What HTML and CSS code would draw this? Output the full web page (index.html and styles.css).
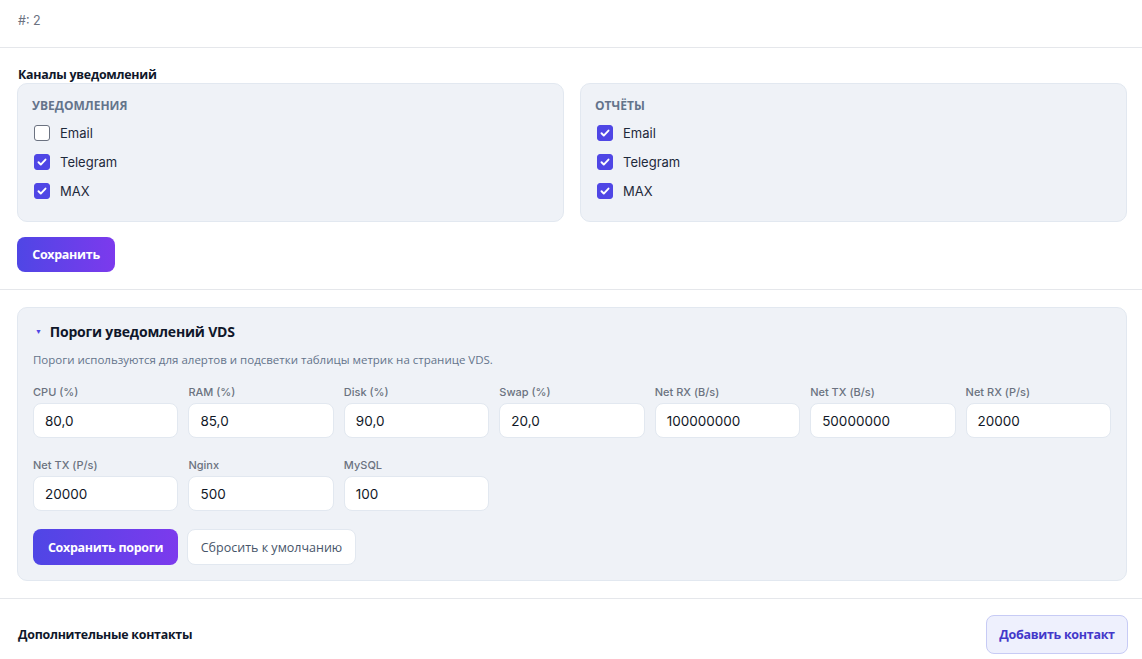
FILE: index.html
```html
<!DOCTYPE html>
<html lang="ru">
<head>
<meta charset="utf-8">
<title>Настройки уведомлений</title>
<link rel="stylesheet" href="styles.css">
</head>
<body>
<div class="top">#: 2</div>

<section class="section">
  <h3 class="heading">Каналы уведомлений</h3>
  <div class="channels">
    <div class="panel">
      <div class="panel-title">Уведомления</div>
      <label class="check"><span class="box"></span>Email</label>
      <label class="check"><span class="box on"><svg viewBox="0 0 16 16"><path d="M4 8.3l2.6 2.6L12 5.2"/></svg></span>Telegram</label>
      <label class="check"><span class="box on"><svg viewBox="0 0 16 16"><path d="M4 8.3l2.6 2.6L12 5.2"/></svg></span>MAX</label>
    </div>
    <div class="panel">
      <div class="panel-title">Отчёты</div>
      <label class="check"><span class="box on"><svg viewBox="0 0 16 16"><path d="M4 8.3l2.6 2.6L12 5.2"/></svg></span>Email</label>
      <label class="check"><span class="box on"><svg viewBox="0 0 16 16"><path d="M4 8.3l2.6 2.6L12 5.2"/></svg></span>Telegram</label>
      <label class="check"><span class="box on"><svg viewBox="0 0 16 16"><path d="M4 8.3l2.6 2.6L12 5.2"/></svg></span>MAX</label>
    </div>
  </div>
  <button class="btn primary save">Сохранить</button>
</section>

<section class="section vds">
  <div class="thresholds">
    <div class="th-title"><span class="caret">▼</span>Пороги уведомлений VDS</div>
    <p class="th-desc">Пороги используются для алертов и подсветки таблицы метрик на странице VDS.</p>
    <div class="fields">
      <div class="field"><span class="label">CPU (%)</span><div class="input">80,0</div></div>
      <div class="field"><span class="label">RAM (%)</span><div class="input">85,0</div></div>
      <div class="field"><span class="label">Disk (%)</span><div class="input">90,0</div></div>
      <div class="field"><span class="label">Swap (%)</span><div class="input">20,0</div></div>
      <div class="field"><span class="label">Net RX (B/s)</span><div class="input">100000000</div></div>
      <div class="field"><span class="label">Net TX (B/s)</span><div class="input">50000000</div></div>
      <div class="field"><span class="label">Net RX (P/s)</span><div class="input">20000</div></div>
      <div class="field"><span class="label">Net TX (P/s)</span><div class="input">20000</div></div>
      <div class="field"><span class="label">Nginx</span><div class="input">500</div></div>
      <div class="field"><span class="label">MySQL</span><div class="input">100</div></div>
    </div>
    <div class="actions">
      <button class="btn primary wide">Сохранить пороги</button>
      <button class="btn ghost">Сбросить к умолчанию</button>
    </div>
  </div>
</section>

<section class="contacts">
  <h3 class="heading">Дополнительные контакты</h3>
  <button class="btn soft">Добавить контакт</button>
</section>
</body>
</html>
```

FILE: styles.css
```css
* { box-sizing: border-box; }

body {
  margin: 0;
  background: #fff;
  font-family: "Open Sans", "Noto Sans", sans-serif;
  color: #0f172a;
}

.top {
  height: 48px;
  padding: 13px 18px 0;
  font-family: "Inter", sans-serif;
  font-size: 12.5px;
  line-height: 16px;
  color: #6b7280;
  border-bottom: 1px solid #e5e7eb;
}

.section {
  padding: 19px 15px 17px 17px;
  border-bottom: 1px solid #e5e7eb;
}

.section.vds {
  padding-top: 17px;
}

.heading {
  margin: 0 0 0 1px;
  font-size: 12.4px;
  line-height: 16px;
  font-weight: 700;
  color: #0f172a;
  letter-spacing: -0.25px;
}

.channels {
  display: grid;
  grid-template-columns: 1fr 1fr;
  gap: 16px;
}

.panel {
  background: #eff2f7;
  border: 1px solid #e2e8f0;
  border-radius: 10px;
  padding: 14px 14px 16px;
  height: 139px;
}

.panel-title {
  font-size: 12px;
  line-height: 16px;
  font-weight: 700;
  text-transform: uppercase;
  color: #64748b;
  margin-bottom: 4px;
}

.check {
  display: flex;
  align-items: center;
  height: 29px;
  padding-left: 2px;
  font-family: "Inter", sans-serif;
  font-size: 13px;
  color: #1e293b;
}

.box {
  width: 16px;
  height: 16px;
  border: 1.5px solid #6b7280;
  border-radius: 3px;
  margin-right: 10px;
  background: #fff;
  display: flex;
  align-items: center;
  justify-content: center;
}

.box.on {
  background: #4f46e5;
  border-color: #4f46e5;
}

.box svg {
  width: 14px;
  height: 14px;
  fill: none;
  stroke: #fff;
  stroke-width: 2.2;
  stroke-linecap: round;
  stroke-linejoin: round;
}

.btn {
  font-family: "Open Sans", sans-serif;
  font-size: 12.5px;
  font-weight: 700;
  border-radius: 8px;
  cursor: pointer;
  letter-spacing: -0.3px;
}

.primary {
  border: none;
  color: #fff;
  background: linear-gradient(90deg, #4f46e5, #7c3aed);
}

.save {
  margin-top: 15px;
  height: 35px;
  width: 98px;
}

.thresholds {
  background: #eff2f7;
  border: 1px solid #e2e8f0;
  border-radius: 10px;
  padding: 15px 15px 15px;
}

.th-title {
  display: flex;
  align-items: center;
  font-size: 14px;
  line-height: 18px;
  font-weight: 700;
  color: #0f172a;
  letter-spacing: -0.2px;
}

.caret {
  font-size: 7px;
  color: #4f46e5;
  margin: 0 8px 0 2px;
}

.th-desc {
  margin: 11px 0 17px;
  font-size: 11.5px;
  line-height: 16px;
  color: #64748b;
}

.fields {
  display: grid;
  grid-template-columns: repeat(7, 1fr);
  column-gap: 10px;
  row-gap: 20px;
}

.field {
  display: flex;
  flex-direction: column;
  gap: 4px;
}

.label {
  font-family: "Inter", sans-serif;
  font-size: 11px;
  line-height: 14px;
  font-weight: 500;
  color: #6b7280;
}

.input {
  height: 35px;
  background: #fff;
  border: 1px solid #e2e8f0;
  border-radius: 8px;
  padding-left: 11px;
  display: flex;
  align-items: center;
  font-family: "Inter", sans-serif;
  font-size: 13.5px;
  color: #111827;
}

.actions {
  display: flex;
  gap: 9px;
  margin-top: 18px;
}

.wide {
  width: 145px;
  height: 36px;
}

.ghost {
  height: 36px;
  width: 169px;
  background: #fff;
  border: 1px solid #e2e8f0;
  color: #475569;
  font-weight: 500;
  letter-spacing: 0;
}

.contacts {
  display: flex;
  align-items: center;
  justify-content: space-between;
  padding: 16px 14px 0 17px;
}

.soft {
  width: 142px;
  height: 39px;
  background: #eef0fd;
  border: 1px solid #c7cbf5;
  color: #4338ca;
}
```
